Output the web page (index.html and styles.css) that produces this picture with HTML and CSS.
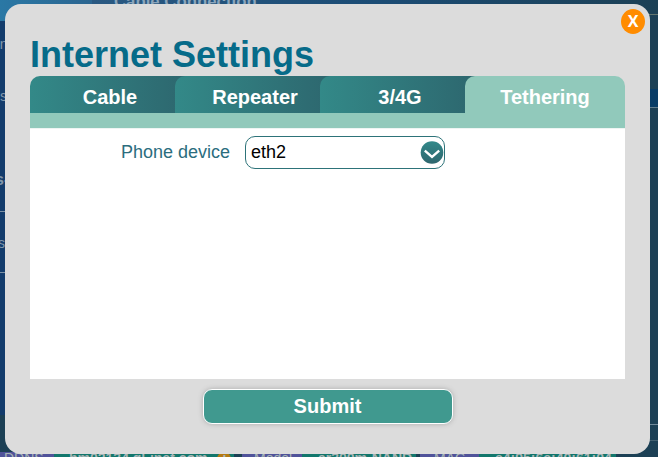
FILE: index.html
```html
<!DOCTYPE html>
<html lang="en">
<head>
<meta charset="utf-8">
<title>Internet Settings</title>
<link rel="stylesheet" href="styles.css">
</head>
<body>
<div class="page">
  <div class="main">
    <aside class="side">
      <div class="side-head"></div>
      <div class="side-row first">on</div>
      <div class="side-row second"><span>s</span></div>
      <div class="side-row title">s-</div>
      <div class="side-row last">s</div>
    </aside>
    <section class="panel">
      <div class="panel-head"><h2>Cable Connection</h2></div>
      <div class="panel-gap"></div>
      <div class="panel-band"></div>
      <div class="panel-body"></div>
      <div class="panel-foot"></div>
    </section>
  </div>
  <footer class="status">
    <span class="key ddns">DDNS</span><span class="val host">hm02134.gl-inet.com <i class="info">i</i></span>
    <span class="key model">Model</span><span class="val board">ar300m-NAND</span>
    <span class="key mac">MAC</span><span class="val addr">e4:95:6e:40:61:04</span>
  </footer>
</div>
<div class="modal">
  <button class="close">X</button>
  <h1>Internet Settings</h1>
  <nav class="tabs">
    <a class="tab">Cable</a>
    <a class="tab">Repeater</a>
    <a class="tab">3/4G</a>
    <a class="tab active">Tethering</a>
  </nav>
  <div class="strip"></div>
  <div class="content">
    <label>Phone device</label>
    <div class="select"><span>eth2</span>
      <svg width="24" height="24" viewBox="0 0 24 24"><defs><linearGradient id="g" x1="0" y1="0" x2="0" y2="1"><stop offset="0" stop-color="#32898a"/><stop offset="1" stop-color="#2e666e"/></linearGradient></defs><circle cx="12" cy="11.5" r="11.3" fill="url(#g)"/><path d="M4.8 9.6 12 15.8l7.2-6.2" fill="none" stroke="#fff" stroke-width="2.4"/></svg>
    </div>
  </div>
  <button class="submit">Submit</button>
</div>
</body>
</html>
```
FILE: styles.css
```css
* { box-sizing: border-box; }
body { margin: 0; width: 658px; height: 457px; overflow: hidden; font-family: "Liberation Sans", Arial, sans-serif; }
.page { height: 457px; display: flex; flex-direction: column; background: #1c4055; color: #8097ab; }
.main { height: 452px; display: flex; }
.side { width: 92px; height: 415px; background: #133c6c; font-size: 14px; }
.side-head { height: 21px; background: linear-gradient(90deg, #2a78a5, #2b6590); border-bottom-right-radius: 14px; }
.side-row { white-space: nowrap; }
.side-row.first { height: 58px; line-height: 46px; text-indent: -8px; }
.side-row.second { height: 78px; line-height: 34px; }
.side-row.title { height: 55px; line-height: 46px; font-size: 16px; font-weight: bold; text-indent: -5px; border-bottom: 1px solid #7b91a6; }
.side-row.last { height: 61px; line-height: 62px; text-indent: -2px; border-bottom: 1px solid #7b91a6; }
.panel { flex: 1; height: 452px; }
.panel-head { height: 15px; overflow: hidden; background: linear-gradient(90deg, #2a5982, #1b4c75 50%, #1c4055); border-bottom: 1px solid #64766f; }
.panel-head h2 { margin: 0 0 0 22px; font-size: 16.8px; line-height: 4px; font-weight: bold; color: #8ba5bb; }
.panel-gap { height: 74px; }
.panel-band { height: 19px; background: #083c66; border-bottom: 1px solid #647f8f; }
.panel-body { height: 317px; border-bottom: 1px solid #718999; }
.panel-foot { height: 16px; border-bottom: 1px solid #436171; }
.status { display: flex; height: 5px; font-size: 14px; line-height: 13px; white-space: nowrap; color: #a8b5b5; }
.key, .val { height: 5px; flex: none; }
.key { background: #50539a; }
.val { background: #12776c; font-weight: bold; }
.ddns { width: 54px; padding-left: 4px; }
.host { width: 180px; padding-left: 15px; margin-right: 8px; }
.model { width: 60px; padding-left: 12px; }
.board { width: 114px; padding-left: 16px; margin-right: 4px; }
.mac { width: 59px; padding-left: 14px; }
.addr { width: 137px; padding-left: 16px; }
.info { display: inline-block; width: 14px; height: 14px; border-radius: 7px; background: #b57a12; margin-left: 6px; vertical-align: top; font-style: normal; text-align: center; }
.modal { position: absolute; left: 5px; top: 4px; width: 645px; height: 450px; padding: 28px 25px 0; border-radius: 16px; background: #dcdcdc; }
.close { position: absolute; left: 616px; top: 5px; width: 24px; height: 25px; padding: 0; border: 0; border-radius: 50%; background: #ff8c00; color: #fff; font: bold 16px/25px "Open Sans", Arial, sans-serif; }
h1 { margin: 0; height: 44px; font-size: 36px; line-height: 46px; color: #066b89; }
.tabs { display: flex; height: 37px; }
.tab { flex: none; width: 160px; margin-right: -15px; border-radius: 10px 0 0 0; background: linear-gradient(90deg, #338988, #2d666e); color: #fff; font-size: 20px; line-height: 42px; font-weight: bold; text-align: center; }
.tab.active { margin-right: 0; border-radius: 10px 10px 0 0; background: #91c9bb; }
.strip { height: 15px; background: #91c9bb; }
.content { display: flex; height: 251px; padding-top: 8px; background: #fff; border-top: 1px solid #eef5f3; }
label { width: 200px; margin-right: 15px; text-align: right; color: #2b6d7e; font-size: 18px; line-height: 31px; }
.select { display: flex; align-items: center; justify-content: space-between; width: 200px; height: 33px; margin-top: -1px; padding: 0 0 0 5px; border: 1px solid #2d7379; border-radius: 10px; font-size: 18px; color: #000; }
.submit { display: block; width: 250px; height: 35px; margin: 10px auto 0 173px; padding: 0 1px 0 0; border: 1px solid #fff; border-radius: 9px; background: #40998f; box-shadow: 0 0 5px #aaa; color: #fff; font: bold 20px/31px "Liberation Sans", Arial, sans-serif; }
```
